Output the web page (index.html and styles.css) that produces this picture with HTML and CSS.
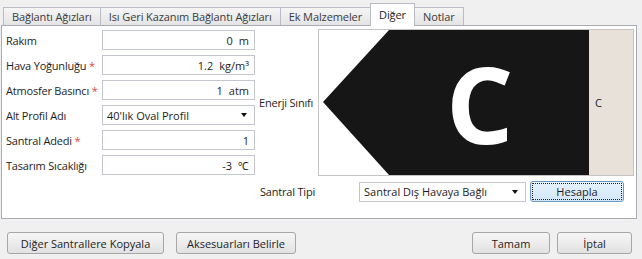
FILE: index.html
```html
<!DOCTYPE html>
<html lang="tr">
<head>
  <meta charset="UTF-8">
  <title>Santral</title>
  <link rel="stylesheet" href="styles.css">
</head>
<body>
  <div class="window">
    <div class="tabs">
      <div class="tab">Bağlantı Ağızları</div>
      <div class="tab">Isı Geri Kazanım Bağlantı Ağızları</div>
      <div class="tab">Ek Malzemeler</div>
      <div class="tab active">Diğer</div>
      <div class="tab">Notlar</div>
    </div>

    <div class="panel">
      <div class="form">
        <span class="label">Rakım</span>
        <div class="field num"><span>0</span><span class="unit">m</span></div>

        <span class="label">Hava Yoğunluğu <b class="req">*</b></span>
        <div class="field num"><span>1.2</span><span class="unit">kg/m³</span></div>

        <span class="label">Atmosfer Basıncı <b class="req">*</b></span>
        <div class="field num"><span>1</span><span class="unit">atm</span></div>

        <span class="label">Alt Profil Adı</span>
        <div class="field select"><span>40'lık Oval Profil</span><i class="caret"></i></div>

        <span class="label">Santral Adedi <b class="req">*</b></span>
        <div class="field num"><span>1</span></div>

        <span class="label">Tasarım Sıcaklığı</span>
        <div class="field num"><span>-3</span><span class="unit">℃</span></div>
      </div>

      <div class="energy">
        <div class="energy-row">
          <span class="label">Enerji Sınıfı</span>
          <div class="frame">
            <div class="arrow">
              <svg width="270" height="145" viewBox="0 0 270 145">
                <polygon points="70,0 270,0 270,145 70,145 4,72" fill="#161616"/>
              </svg>
              <span class="big-letter">C</span>
            </div>
            <div class="class-cell">C</div>
          </div>
        </div>
        <div class="type-row">
          <span class="label">Santral Tipi</span>
          <div class="field select wide"><span>Santral Dış Havaya Bağlı</span><i class="caret"></i></div>
          <button class="btn calc">Hesapla</button>
        </div>
      </div>
    </div>

    <div class="footer">
      <button class="btn copy">Diğer Santrallere Kopyala</button>
      <button class="btn acc">Aksesuarları Belirle</button>
      <span class="spacer"></span>
      <button class="btn ok">Tamam</button>
      <button class="btn cancel">İptal</button>
    </div>
  </div>
</body>
</html>
```

FILE: styles.css
```css
* {
  box-sizing: border-box;
}
html, body {
  margin: 0;
  padding: 0;
}
body {
  width: 642px;
  height: 259px;
  background: #f0f0f0;
  font-family: "Open Sans", "Noto Sans", sans-serif;
  font-size: 11px;
  color: #1e1e1e;
  overflow: hidden;
}

.window {
  display: flex;
  flex-direction: column;
}

/* tabs */
.tabs {
  display: flex;
  align-items: flex-end;
  height: 25px;
  padding-left: 3px;
}
.tab {
  height: 18px;
  padding: 0 8px;
  margin-right: -1px;
  display: flex;
  align-items: center;
  border: 1px solid #b9bcc2;
  border-bottom: none;
  background: linear-gradient(#f5f5f5, #e4e4e4);
  color: #3c3c3c;
  white-space: nowrap;
  letter-spacing: -0.1px;
}
.tab.active {
  height: 23px;
  margin-bottom: -1px;
  padding: 0 8px 2px;
  background: #fff;
  color: #1e1e1e;
  position: relative;
  z-index: 1;
}

/* panel */
.panel {
  width: 636px;
  height: 194px;
  margin-left: 1px;
  border: 1px solid #a9acb2;
  background: #fff;
  display: flex;
  gap: 4px;
  padding: 4px 3px 0 4px;
}

.form {
  display: grid;
  grid-template-columns: 96px 153px;
  grid-auto-rows: 20px;
  row-gap: 5px;
  align-items: center;
}
.label {
  white-space: nowrap;
  letter-spacing: -0.2px;
}
.req {
  color: #e0454a;
  font-weight: normal;
}

.field {
  height: 20px;
  border: 1px solid #c3c6cc;
  background: #fff;
  display: flex;
  align-items: center;
  white-space: nowrap;
}
.field.num {
  justify-content: flex-end;
  gap: 6px;
  padding-right: 5px;
}
.field.select {
  justify-content: space-between;
  padding: 0 7px 0 4px;
}
.caret {
  width: 0;
  height: 0;
  border-left: 3.5px solid transparent;
  border-right: 3.5px solid transparent;
  border-top: 4px solid #111;
}

/* energy class */
.energy {
  display: flex;
  flex-direction: column;
  gap: 5px;
  margin-top: -1px;
}
.energy-row {
  display: flex;
  align-items: center;
}
.energy-row .label {
  width: 59px;
}
.frame {
  width: 316px;
  height: 147px;
  border: 1px solid #c4c4c4;
  background: #fff;
  display: flex;
}
.arrow {
  display: grid;
  width: 270px;
}
.arrow svg,
.arrow .big-letter {
  grid-area: 1 / 1;
}
.big-letter {
  align-self: center;
  margin-left: 127px;
  font-size: 106px;
  font-weight: 700;
  line-height: 1;
  color: #fff;
}
.class-cell {
  flex: 1;
  background: #e8e1da;
  display: flex;
  align-items: center;
  padding-left: 6px;
}

.type-row {
  display: flex;
  align-items: center;
  height: 21px;
  padding-left: 1px;
}
.type-row .label {
  width: 99px;
}
.field.wide {
  width: 167px;
  height: 20px;
}

/* buttons */
.btn {
  font-family: inherit;
  font-size: 11px;
  color: #1e1e1e;
  height: 22px;
  border: 1px solid #a7a7a7;
  border-radius: 3px;
  background: linear-gradient(#f6f6f6, #e2e2e2);
  padding: 0;
}
.btn.calc {
  width: 94px;
  height: 21px;
  margin-left: 4px;
  background: linear-gradient(#e6f2fd, #d3e7fa);
  border-color: #6f9ac4;
  outline: 1px dotted #222;
  outline-offset: -3px;
}

.footer {
  display: flex;
  padding: 13px 10px 0 7px;
  gap: 12px;
}
.copy { width: 157px; }
.acc { width: 120px; }
.spacer { flex: 1; }
.ok { width: 78px; margin-right: -5px; }
.cancel { width: 75px; }
```
